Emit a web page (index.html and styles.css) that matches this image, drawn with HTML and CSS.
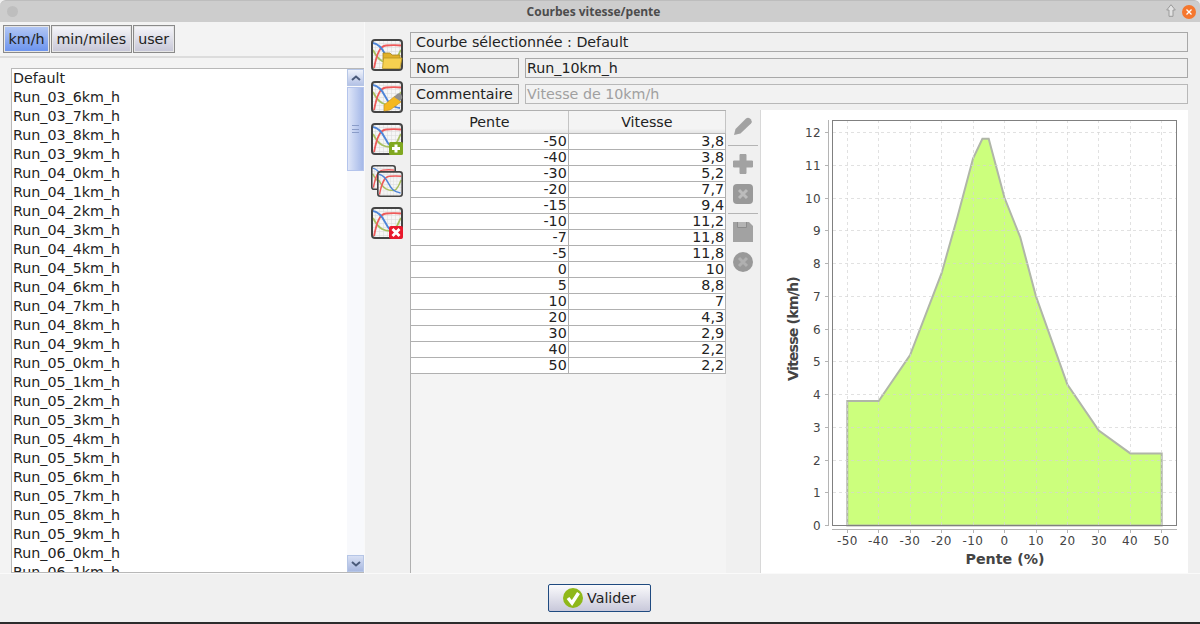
FILE: index.html
```html
<!DOCTYPE html>
<html>
  <head>
    <meta charset="utf-8">
    <meta name="viewport" content="width=device-width, initial-scale=1.0">
    <title>Courbes vitesse/pente</title>
    <link rel="stylesheet" href="styles.css">
  </head>
  <body>
    <svg class="defs" width="0" height="0">
      <defs>
        <pattern id="grid" width="4" height="4" patternUnits="userSpaceOnUse">
          <path d="M4 0H0V4" fill="none" stroke="#d8d8d8" stroke-width="1"/>
        </pattern>
        <symbol id="curves" viewBox="0 0 32 32">
          <rect x="1" y="1" width="30" height="30" rx="3" fill="#f6f6f6"/>
          <rect x="1" y="1" width="30" height="30" rx="3" fill="url(#grid)"/>
          <path d="M2 11C8 23 14 24 20 24S27 15 30 11" fill="none" stroke="#a8c060" stroke-width="1.800"/>
          <path d="M3 29C6 14 9 7 15 6.500S25 6 30 6.500" fill="none" stroke="#ee5a5a" stroke-width="1.800"/>
          <path d="M2 4C8 5 11 9 14 15S20 26 29 27" fill="none" stroke="#4d84d8" stroke-width="1.800"/>
          <rect x="1" y="1" width="30" height="30" rx="3" fill="none" stroke="#444" stroke-width="2"/>
        </symbol>
      </defs>
    </svg>

    <header class="titlebar">
      <span class="win-dot"></span>
      <span class="win-title">Courbes vitesse/pente</span>
      <svg class="win-up" width="10" height="13" viewBox="0 0 10 13">
        <path d="M5 .700L9.300 6H7V12.300H3V6H.700Z" fill="#e2e2e2" stroke="#9a9a9a"/>
      </svg>
      <svg class="win-close" width="14" height="14" viewBox="0 0 14 14">
        <circle cx="7" cy="7" r="7" fill="#f5772d"/>
        <path d="M4.500 4.500L9.500 9.500M9.500 4.500L4.500 9.500" stroke="#fff" stroke-width="1.300"/>
      </svg>
    </header>

    <main class="content">
      <section class="left">
        <div class="unit-bar">
          <button class="unit active">km/h</button>
          <button class="unit">min/miles</button>
          <button class="unit">user</button>
        </div>
        <div class="list-wrap">
          <div class="list">
            <ul class="items">
              <li>Default</li>
              <li>Run_03_6km_h</li>
              <li>Run_03_7km_h</li>
              <li>Run_03_8km_h</li>
              <li>Run_03_9km_h</li>
              <li>Run_04_0km_h</li>
              <li>Run_04_1km_h</li>
              <li>Run_04_2km_h</li>
              <li>Run_04_3km_h</li>
              <li>Run_04_4km_h</li>
              <li>Run_04_5km_h</li>
              <li>Run_04_6km_h</li>
              <li>Run_04_7km_h</li>
              <li>Run_04_8km_h</li>
              <li>Run_04_9km_h</li>
              <li>Run_05_0km_h</li>
              <li>Run_05_1km_h</li>
              <li>Run_05_2km_h</li>
              <li>Run_05_3km_h</li>
              <li>Run_05_4km_h</li>
              <li>Run_05_5km_h</li>
              <li>Run_05_6km_h</li>
              <li>Run_05_7km_h</li>
              <li>Run_05_8km_h</li>
              <li>Run_05_9km_h</li>
              <li>Run_06_0km_h</li>
              <li>Run_06_1km_h</li>
            </ul>
            <div class="scrollbar">
              <div class="sb-btn">
                <svg width="10" height="6" viewBox="0 0 10 6"><path d="M1 5L5 1.500L9 5" fill="none" stroke="#4a5a7a" stroke-width="2"/></svg>
              </div>
              <div class="sb-thumb"><span class="sb-grip"></span></div>
              <div class="sb-track"></div>
              <div class="sb-btn sb-btn-down">
                <svg width="10" height="6" viewBox="0 0 10 6"><path d="M1 1L5 4.500L9 1" fill="none" stroke="#4a5a7a" stroke-width="2"/></svg>
              </div>
            </div>
          </div>
        </div>
      </section>

      <nav class="curve-tools">
        <svg class="curve-icon" width="32" height="32" viewBox="0 0 32 32">
          <use href="#curves" width="32" height="32"/>
          <path d="M12 14H19L21 16H29V21H12Z" fill="#e0b028" stroke="#a8871c" stroke-width=".8"/>
          <path d="M12.500 19H31L29 29.500H11.500Z" fill="#f6d050" stroke="#b8941f" stroke-width=".8"/>
        </svg>
        <svg class="curve-icon" width="32" height="32" viewBox="0 0 32 32">
          <use href="#curves" width="32" height="32"/>
          <path d="M13 24L24 15L30 21L19 29L13 30Z" fill="#f4b820" stroke="#c98f10" stroke-width=".6"/>
          <path d="M23 16L26 13Q28 11.500 30 13L31 15Q32 17 30 19L29 20Z" fill="#8f8f8f"/>
        </svg>
        <svg class="curve-icon" width="32" height="32" viewBox="0 0 32 32">
          <use href="#curves" width="32" height="32"/>
          <rect x="18" y="19" width="14" height="13" rx="1.500" fill="#80a820"/>
          <path d="M25 21.500V29.500M21 25.500H29" stroke="#fff" stroke-width="3"/>
        </svg>
        <svg class="curve-icon" width="32" height="32" viewBox="0 0 32 32">
          <use href="#curves" x="0" y="0" width="25" height="25"/>
          <use href="#curves" x="6" y="6" width="26" height="26"/>
        </svg>
        <svg class="curve-icon" width="32" height="32" viewBox="0 0 32 32">
          <use href="#curves" width="32" height="32"/>
          <rect x="18" y="19" width="14" height="13" rx="2" fill="#e8182c"/>
          <path d="M21.500 22L28.500 29M28.500 22L21.500 29" stroke="#fff" stroke-width="2.800"/>
        </svg>
      </nav>

      <section class="right">
        <div class="fields">
          <div class="field-row">
            <div class="label wide">Courbe sélectionnée : Default</div>
          </div>
          <div class="field-row">
            <div class="label">Nom</div>
            <div class="input">Run_10km_h</div>
          </div>
          <div class="field-row">
            <div class="label">Commentaire</div>
            <div class="input muted">Vitesse de 10km/h</div>
          </div>
        </div>

        <div class="editor">
          <div class="table-pane">
            <table class="points">
              <thead>
                <tr><th>Pente</th><th>Vitesse</th></tr>
              </thead>
              <tbody>
                <tr><td>-50</td><td>3,8</td></tr>
                <tr><td>-40</td><td>3,8</td></tr>
                <tr><td>-30</td><td>5,2</td></tr>
                <tr><td>-20</td><td>7,7</td></tr>
                <tr><td>-15</td><td>9,4</td></tr>
                <tr><td>-10</td><td>11,2</td></tr>
                <tr><td>-7</td><td>11,8</td></tr>
                <tr><td>-5</td><td>11,8</td></tr>
                <tr><td>0</td><td>10</td></tr>
                <tr><td>5</td><td>8,8</td></tr>
                <tr><td>10</td><td>7</td></tr>
                <tr><td>20</td><td>4,3</td></tr>
                <tr><td>30</td><td>2,9</td></tr>
                <tr><td>40</td><td>2,2</td></tr>
                <tr><td>50</td><td>2,2</td></tr>
              </tbody>
            </table>
          </div>

          <div class="row-tools">
            <svg class="row-icon" width="22" height="22" viewBox="0 0 22 22">
              <path d="M2 20L3.500 14L14 3.500Q16 2 18 3.500L19 4.500Q20.500 6.500 19 8.500L8.500 18.500Z" fill="#a2a2a2"/>
            </svg>
            <hr class="tool-sep">
            <svg class="row-icon" width="22" height="22" viewBox="0 0 22 22">
              <path d="M8 1.500H14V8H20.500V14H14V20.500H8V14H1.500V8H8Z" fill="#a2a2a2" stroke="#a2a2a2" stroke-linejoin="round"/>
            </svg>
            <svg class="row-icon" width="22" height="22" viewBox="0 0 22 22">
              <rect x="1" y="1" width="20" height="20" rx="4" fill="#999"/>
              <path d="M7 7L15 15M15 7L7 15" stroke="#bcbcbc" stroke-width="3"/>
            </svg>
            <hr class="tool-sep">
            <svg class="row-icon" width="22" height="22" viewBox="0 0 22 22">
              <path d="M1 1H17L21 5V21H1Z" fill="#a2a2a2"/>
              <path d="M5.500 1V6.500H14.500V1" fill="#b4b4b4" stroke="#8c8c8c"/>
            </svg>
            <svg class="row-icon" width="22" height="22" viewBox="0 0 22 22">
              <circle cx="11" cy="11" r="10" fill="#999"/>
              <path d="M7 7L15 15M15 7L7 15" stroke="#b0b0b0" stroke-width="3"/>
            </svg>
          </div>

          <div class="chart-pane">
            <svg class="chart" width="427" height="463" viewBox="761 110 427 463">
              <rect class="plot-bg" x="832.500" y="120.500" width="344" height="405"/>
              <polygon class="curve" points="847.300,525.500 847.300,401 878.700,401 910.100,355.100 941.600,273.200 957.300,217.500 973,158.500 982.400,138.800 988.700,138.800 1004.500,197.800 1020.200,237.100 1035.900,296.100 1067.400,384.600 1098.800,430.500 1130.300,453.400 1161.700,453.400 1161.700,525.500"/>
              <path class="grid" d="M847.500 120V525M878.500 120V525M910.500 120V525M941.500 120V525M973.500 120V525M1004.500 120V525M1036.500 120V525M1067.500 120V525M1098.500 120V525M1130.500 120V525M1161.500 120V525M833 132.500H1176M833 165.500H1176M833 198.500H1176M833 230.500H1176M833 263.500H1176M833 296.500H1176M833 329.500H1176M833 361.500H1176M833 394.500H1176M833 427.500H1176M833 460.500H1176M833 492.500H1176"/>
              <rect class="plot-frame" x="832.500" y="120.500" width="344" height="405"/>
              <path class="axis" d="M828.500 120V526M832 529.500H1177"/>
              <path class="axis" d="M825 132.500H829M825 165.500H829M825 198.500H829M825 230.500H829M825 263.500H829M825 296.500H829M825 329.500H829M825 361.500H829M825 394.500H829M825 427.500H829M825 460.500H829M825 492.500H829M825 525.500H829"/>
              <path class="axis" d="M847.500 529V533M878.500 529V533M910.500 529V533M941.500 529V533M973.500 529V533M1004.500 529V533M1036.500 529V533M1067.500 529V533M1098.500 529V533M1130.500 529V533M1161.500 529V533"/>
              <g class="y-labels">
                <text x="821" y="137">12</text>
                <text x="821" y="170">11</text>
                <text x="821" y="203">10</text>
                <text x="821" y="235">9</text>
                <text x="821" y="268">8</text>
                <text x="821" y="301">7</text>
                <text x="821" y="334">6</text>
                <text x="821" y="366">5</text>
                <text x="821" y="399">4</text>
                <text x="821" y="432">3</text>
                <text x="821" y="465">2</text>
                <text x="821" y="497">1</text>
                <text x="821" y="530">0</text>
              </g>
              <g class="x-labels">
                <text x="847.500" y="545">-50</text>
                <text x="878.500" y="545">-40</text>
                <text x="910" y="545">-30</text>
                <text x="941.500" y="545">-20</text>
                <text x="973" y="545">-10</text>
                <text x="1004.500" y="545">0</text>
                <text x="1036" y="545">10</text>
                <text x="1067.500" y="545">20</text>
                <text x="1099" y="545">30</text>
                <text x="1130" y="545">40</text>
                <text x="1161.500" y="545">50</text>
              </g>
              <text class="axis-title" x="1005" y="564">Pente (%)</text>
              <text class="axis-title axis-title-y" transform="translate(798 329) rotate(-90)">Vitesse (km/h)</text>
            </svg>
          </div>
        </div>
      </section>
    </main>

    <footer class="actions">
      <button class="validate">
        <svg width="20" height="20" viewBox="0 0 20 20">
          <circle cx="10" cy="10" r="10" fill="#8fb81a"/>
          <path d="M5 10L9 15L15.500 5" fill="none" stroke="#fff" stroke-width="3.400"/>
        </svg>
        Valider
      </button>
    </footer>
    <div class="desktop-edge"></div>
  </body>
</html>
```

FILE: styles.css
```css
html, body {
  width: 100%;
  height: 100%;
  margin: 0;
  padding: 0;
  background-color: #f0f0f0;
  color: #222;
  font-family: "DejaVu Sans", sans-serif;
  font-size: 14.25px;
  overflow: hidden;
}
body {
  display: flex;
  flex-direction: column;
}
.defs {
  display: block;
  height: 0;
}
.titlebar {
  height: 22px;
  flex: none;
  display: flex;
  align-items: center;
  background-color: #cdcdcd;
  border-radius: 6px 6px 0 0;
  box-sizing: border-box;
  border-top: 1px solid #bdbdbd;
  padding: 0 4px 0 7px;
}
.win-dot {
  width: 11px;
  height: 11px;
  border-radius: 50%;
  background-color: #bebebe;
}
.win-title {
  flex: 1;
  text-align: center;
  font-family: "Open Sans", "DejaVu Sans", sans-serif;
  font-size: 12px;
  font-weight: 700;
  color: #4c4c4c;
  padding-left: 3px;
}
.win-up {
  margin: 0 6px 2px 0;
}
.win-close {
  flex: none;
}

.content {
  flex: 1;
  min-height: 0;
  display: flex;
}

/* left: unit switch and curve list */
.left {
  width: 365px;
  flex: none;
  box-sizing: border-box;
  display: flex;
  flex-direction: column;
  background-color: #f3f3f3;
  border-right: 1px solid #f9f9f9;
}
.unit-bar {
  height: 36px;
  flex: none;
  box-sizing: border-box;
  display: flex;
  gap: 1px;
  padding: 3px 0 4px 3px;
  border-bottom: 2px solid #dcdcdc;
}
.unit {
  font: inherit;
  color: #222;
  padding: 0 4.5px;
  margin: 0;
  height: 28px;
  background: linear-gradient(#f6f6fa, #c6c6d6);
  border: 1px solid #8a8a8a;
  outline: 1px solid #e6e6e6;
  outline-offset: -2px;
}
.unit.active {
  background: linear-gradient(#b4c8f4, #6a92ee);
}
.list-wrap {
  flex: 1;
  min-height: 0;
  padding: 10px 0 0 11px;
}
.list {
  height: 100%;
  box-sizing: border-box;
  display: flex;
  background-color: #fff;
  border: 1px solid #b8b8b8;
  border-right: none;
}
.items {
  flex: 1;
  list-style: none;
  margin: 0;
  padding: 0 0 0 1px;
  overflow: hidden;
  line-height: 19px;
  color: #222;
}
.scrollbar {
  width: 17px;
  flex: none;
  display: flex;
  flex-direction: column;
  background-color: #f8f9fc;
}
.sb-btn {
  height: 17px;
  flex: none;
  display: flex;
  align-items: center;
  justify-content: center;
  background: linear-gradient(#eef2fb, #b4c2e6);
  border: 1px solid #b6c6e6;
  box-sizing: border-box;
}
.sb-btn-down {
  background: linear-gradient(#d8e0f4, #a8b8e0);
}
.sb-thumb {
  height: 84px;
  flex: none;
  margin-top: 1px;
  box-sizing: border-box;
  display: flex;
  align-items: center;
  justify-content: center;
  background: linear-gradient(90deg, #dfe6f8, #a4b8e8);
  border: 1px solid #b4c4ec;
}
.sb-grip {
  width: 7px;
  height: 6px;
  border-top: 1px solid #8a9cc8;
  border-bottom: 1px solid #8a9cc8;
  background: linear-gradient(#8a9cc8, #8a9cc8) center / 100% 1px no-repeat;
}
.sb-track {
  flex: 1;
}

/* icon strip between list and form */
.curve-tools {
  width: 45px;
  flex: none;
  box-sizing: border-box;
  display: flex;
  flex-direction: column;
  gap: 10px;
  padding: 17px 0 0 6px;
}
.curve-icon {
  display: block;
  flex: none;
}

.right {
  flex: 1;
  min-width: 0;
  display: flex;
  flex-direction: column;
  padding: 10px 12px 0 0;
}
.fields {
  flex: none;
  display: flex;
  flex-direction: column;
  gap: 6px;
}
.field-row {
  display: flex;
  gap: 6px;
  height: 20px;
}
.label, .input {
  box-sizing: border-box;
  height: 20px;
  line-height: 18px;
  border: 1px solid #a8a8a8;
  background-color: #f0f0f0;
  white-space: nowrap;
}
.label {
  width: 109px;
  flex: none;
  padding-left: 5px;
}
.label.wide {
  width: 100%;
}
.input {
  flex: 1;
  padding-left: 1px;
}
.input.muted {
  color: #a0a0a0;
  background-color: #f2f2f2;
  border-color: #b8b8b8;
}

.editor {
  flex: 1;
  min-height: 0;
  margin-top: 6px;
  display: flex;
}
.table-pane {
  width: 316px;
  flex: none;
  box-sizing: border-box;
  border-top: 1px solid #b0b0b0;
  border-left: 1px solid #b0b0b0;
  background-color: #f4f4f4;
}
.points {
  width: 315px;
  table-layout: fixed;
  border-collapse: collapse;
}
.points th {
  height: 22px;
  padding: 0;
  font-weight: 400;
  text-align: center;
  background: linear-gradient(#f4f4f4 80%, #e4e4e4);
  border-right: 1px solid #c4c4c4;
  border-bottom: 1px solid #b8b8b8;
}
.points td {
  height: 15px;
  padding: 0 1px 0 0;
  line-height: 15px;
  text-align: right;
  background-color: #fff;
  border-right: 1px solid #b0b0b0;
  border-bottom: 1px solid #b0b0b0;
}
.row-tools {
  width: 35px;
  flex: none;
  box-sizing: border-box;
  display: flex;
  flex-direction: column;
  align-items: center;
  padding: 5px 2px 0 2px;
  border-right: 1px solid #d8d8d8;
}
.row-icon {
  display: block;
  flex: none;
  margin-bottom: 8px;
}
.tool-sep {
  width: 100%;
  height: 0;
  margin: 0 0 7px;
  border: none;
  border-top: 1px solid #b4b4b4;
}
.chart-pane {
  flex: 1;
  min-width: 0;
  background-color: #fff;
}
.chart {
  display: block;
}
.plot-bg {
  fill: #fff;
}
.curve {
  fill: #c3ff66;
  fill-opacity: .85;
  stroke: #b0b6a8;
  stroke-width: 2;
}
.grid {
  fill: none;
  stroke: #d4d4d4;
  stroke-opacity: .7;
  stroke-dasharray: 3 3;
}
.plot-frame {
  fill: none;
  stroke: #808080;
}
.axis {
  fill: none;
  stroke: #b4b4b4;
}
.y-labels text, .x-labels text {
  font-size: 12px;
  letter-spacing: .4px;
  fill: #444;
}
.y-labels text {
  text-anchor: end;
}
.x-labels text {
  text-anchor: middle;
}
.axis-title {
  font-size: 14.250px;
  font-weight: 700;
  text-anchor: middle;
  fill: #444;
}
.axis-title-y {
  letter-spacing: -.9px;
}

.actions {
  height: 49px;
  flex: none;
  box-sizing: border-box;
  display: flex;
  justify-content: center;
  padding: 10px 1px 0 0;
  border-top: 1px solid #fafafa;
}
.validate {
  width: 103px;
  height: 28px;
  box-sizing: border-box;
  display: flex;
  align-items: center;
  justify-content: center;
  gap: 4px;
  padding: 0;
  font: inherit;
  color: #222;
  background: linear-gradient(#fafafc, #c8c8da);
  border: 1px solid #1f4a80;
  border-radius: 2px;
}
.desktop-edge {
  height: 2px;
  flex: none;
  background-color: #2c2c2c;
}
```
